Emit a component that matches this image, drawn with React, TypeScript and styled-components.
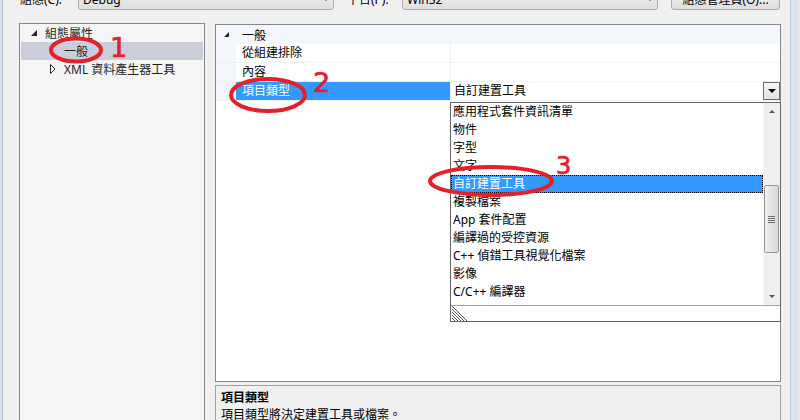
import React from 'react';
import styled, { createGlobalStyle } from 'styled-components';

const GlobalStyle = createGlobalStyle`
  html, body {
    margin: 0;
    padding: 0;
  }
  body {
    font-family: "Noto Sans", "Noto Sans CJK TC", sans-serif;
    font-size: 12px;
    color: #000;
  }
`;

const Screen = styled.div`
  position: relative;
  width: 800px;
  height: 420px;
  overflow: hidden;
  display: flex;
  background: #f0f0f0;
`;

const LeftEdge = styled.div`
  flex: none;
  width: 2px;
  background: #dae3ee;
  border-right: 1px solid #b4bfcb;
`;

const RightEdge = styled.div`
  flex: none;
  width: 6px;
  background: #dae3ef;
  border-left: 1px solid #c3ccd6;
  border-right: 3px solid #e6e6e6;
`;

const Main = styled.div`
  flex: none;
  width: 787px;
  box-sizing: border-box;
  padding: 0 9px 0 16px;
  display: flex;
  flex-direction: column;
`;

const TopBar = styled.div`
  flex: none;
  height: 22px;
  margin-top: -12px;
  display: flex;
  align-items: center;
`;

const Label = styled.div<{ $width: number; $pad?: number }>`
  width: ${({ $width }) => $width}px;
  padding-left: ${({ $pad = 0 }) => $pad}px;
  box-sizing: border-box;
  flex: none;
  white-space: nowrap;
`;

const Combo = styled.div`
  flex: none;
  width: 256px;
  height: 22px;
  box-sizing: border-box;
  border: 1px solid #acacac;
  border-radius: 3px;
  background: linear-gradient(#f4f4f4, #dedede);
  display: flex;
  align-items: center;
  justify-content: space-between;
  padding: 0 4px 0 4px;
`;

const ComboArrow = styled.span`
  width: 0;
  height: 0;
  border-left: 3px solid transparent;
  border-right: 3px solid transparent;
  border-top: 4px solid #000;
`;

const TopButton = styled.div`
  flex: none;
  width: 109px;
  height: 22px;
  margin-left: 13px;
  box-sizing: border-box;
  border: 1px solid #acacac;
  border-radius: 3px;
  background: linear-gradient(#f4f4f4, #dedede);
  display: flex;
  align-items: center;
  justify-content: center;
  white-space: nowrap;
`;

const ContentRow = styled.div`
  flex: none;
  height: 420px;
  margin-top: 13px;
  display: flex;
  gap: 10px;
`;

const TreePanel = styled.div`
  flex: none;
  width: 186px;
  box-sizing: border-box;
  border: 1px solid #828790;
  background: #f5f5f5;
  padding: 0 1px;
`;

const TreeRow = styled.div<{ $indent: number; $selected?: boolean }>`
  height: 18px;
  display: flex;
  align-items: center;
  padding-left: ${({ $indent }) => $indent}px;
  background: ${({ $selected }) => ($selected ? '#cbcdda' : 'transparent')};
  white-space: nowrap;
  color: #1e1e1e;
`;

const Expander = styled.span`
  flex: none;
  width: 14px;
  height: 18px;
  display: flex;
  align-items: center;
`;

const PropsColumn = styled.div`
  flex: none;
  width: 566px;
  display: flex;
  flex-direction: column;
  gap: 3px;
  margin-top: 1px;
`;

const GridPanel = styled.div`
  position: relative;
  flex: none;
  height: 358px;
  box-sizing: border-box;
  border: 1px solid #828790;
  background: #fff;
`;

const CategoryRow = styled.div`
  height: 19px;
  display: flex;
  align-items: center;
  padding-left: 8px;
  background: #f3f6fb;
`;

const CategoryExpander = styled.span`
  flex: none;
  width: 18px;
  display: flex;
  align-items: center;
`;

const PropRow = styled.div`
  height: 19px;
  box-sizing: border-box;
  display: grid;
  grid-template-columns: 20px 215px 1fr;
  border-bottom: 1px solid #f0f0f0;
`;

const Margin = styled.div`
  background: #f3f6fb;
`;

const NameCell = styled.div<{ $selected?: boolean }>`
  padding-left: 6px;
  line-height: 18px;
  border-right: 1px solid #f0f0f0;
  background: ${({ $selected }) => ($selected ? '#3399ff' : '#fff')};
  color: ${({ $selected }) => ($selected ? '#fff' : '#000')};
  white-space: nowrap;
`;

const ValueCell = styled.div`
  display: flex;
  align-items: center;
  justify-content: space-between;
  padding-left: 3px;
  line-height: 18px;
  white-space: nowrap;
`;

const DropButton = styled.div`
  width: 17px;
  height: 18px;
  box-sizing: border-box;
  border: 1px solid #6d6d6d;
  background: linear-gradient(#f6f6f6, #e2e2e2);
  display: flex;
  align-items: center;
  justify-content: center;
`;

const DownArrow = styled.span<{ $color?: string; $size?: number }>`
  width: 0;
  height: 0;
  border-left: ${({ $size = 4 }) => $size}px solid transparent;
  border-right: ${({ $size = 4 }) => $size}px solid transparent;
  border-top: ${({ $size = 4 }) => $size}px solid ${({ $color = '#000' }) => $color};
`;

const UpArrow = styled.span<{ $color?: string; $size?: number }>`
  width: 0;
  height: 0;
  border-left: ${({ $size = 4 }) => $size}px solid transparent;
  border-right: ${({ $size = 4 }) => $size}px solid transparent;
  border-bottom: ${({ $size = 4 }) => $size}px solid ${({ $color = '#000' }) => $color};
`;

const DropList = styled.div`
  position: absolute;
  left: 234px;
  top: 77px;
  width: 331px;
  height: 220px;
  box-sizing: border-box;
  border: 1px solid #646464;
  background: #fff;
  display: flex;
  flex-direction: column;
  z-index: 2;
`;

const ListBody = styled.div`
  flex: none;
  height: 202px;
  display: flex;
`;

const Items = styled.div`
  flex: none;
  width: 312px;
`;

const Item = styled.div<{ $selected?: boolean }>`
  height: 18px;
  line-height: 18px;
  box-sizing: border-box;
  padding-left: 2px;
  white-space: nowrap;
  background: ${({ $selected }) => ($selected ? '#3399ff' : '#fff')};
  color: ${({ $selected }) => ($selected ? '#fff' : '#000')};
  outline: ${({ $selected }) => ($selected ? '1px dotted #000' : 'none')};
  outline-offset: -1px;
`;

const Scrollbar = styled.div`
  flex: none;
  width: 16px;
  background: #f0f0f0;
  border-left: 1px solid #f6f6f6;
  display: flex;
  flex-direction: column;
`;

const ScrollButton = styled.div`
  flex: none;
  height: 17px;
  display: flex;
  align-items: center;
  justify-content: center;
`;

const Track = styled.div`
  flex: 1;
`;

const Thumb = styled.div`
  margin-top: 65px;
  width: 15px;
  height: 68px;
  box-sizing: border-box;
  border: 1px solid #979797;
  border-radius: 2px;
  background: linear-gradient(90deg, #f0f0f0, #d6d6d6);
  display: flex;
  flex-direction: column;
  align-items: center;
  justify-content: center;
  gap: 1px;
`;

const GripLine = styled.span`
  width: 7px;
  height: 1px;
  background: #6f6f6f;
`;

const ListFooter = styled.div`
  flex: 1;
  border-top: 1px solid #a0a0a0;
  display: flex;
  align-items: flex-end;
  padding-left: 1px;
`;

const DescPanel = styled.div`
  flex: 1;
  box-sizing: border-box;
  border: 1px solid #a0a0a0;
  background: #f0f0f0;
  padding: 3px 5px;
  line-height: 17px;
`;

const DescTitle = styled.div`
  font-weight: bold;
`;

const Overlay = styled.svg`
  position: absolute;
  left: 0;
  top: 0;
  pointer-events: none;
  z-index: 5;
`;

const FilledExpander = ({ size = 6 }: { size?: number }) => (
  <svg width={size} height={size} viewBox="0 0 6 6">
    <polygon points="6,0 6,6 0,6" fill="#262626" />
  </svg>
);

const HollowExpander = () => (
  <svg width="6" height="10" viewBox="0 0 6 10">
    <polygon points="0.5,0.5 5,5 0.5,9.5" fill="#fff" stroke="#262626" strokeWidth="1" />
  </svg>
);

const Grip = () => (
  <svg width="16" height="15" viewBox="0 0 16 15">
    {[0, 3, 6, 9, 12].map(y => (
      <line key={y} x1="0" y1={y} x2={15 - y} y2="15" stroke="#555" strokeWidth="1" />
    ))}
  </svg>
);

const listItems = [
  '應用程式套件資訊清單',
  '物件',
  '字型',
  '文字',
  '自訂建置工具',
  '複製檔案',
  'App 套件配置',
  '編譯過的受控資源',
  'C++ 偵錯工具視覺化檔案',
  '影像',
  'C/C++ 編譯器',
];

const props = ['從組建排除', '內容', '項目類型'];

const App = () => {
  const selectedItem = '自訂建置工具';

  return (
    <Screen>
      <GlobalStyle />
      <LeftEdge />
      <Main>
        <TopBar>
          <Label $width={59} $pad={1}>組態(C):</Label>
          <Combo>
            <span>Debug</span>
            <ComboArrow />
          </Combo>
          <Label $width={68} $pad={13}>平台(P):</Label>
          <Combo>
            <span>Win32</span>
            <ComboArrow />
          </Combo>
          <TopButton>組態管理員(O)...</TopButton>
        </TopBar>

        <ContentRow>
          <TreePanel>
            <TreeRow $indent={10}>
              <Expander><FilledExpander /></Expander>
              組態屬性
            </TreeRow>
            <TreeRow $indent={29} $selected>
              <Expander />
              一般
            </TreeRow>
            <TreeRow $indent={29}>
              <Expander><HollowExpander /></Expander>
              XML 資料產生器工具
            </TreeRow>
          </TreePanel>

          <PropsColumn>
            <GridPanel>
              <CategoryRow>
                <CategoryExpander><FilledExpander size={5} /></CategoryExpander>
                一般
              </CategoryRow>
              {props.map((name, i) => {
                const selected = i === props.length - 1;
                return (
                  <PropRow key={name}>
                    <Margin />
                    <NameCell $selected={selected}>{name}</NameCell>
                    <ValueCell>
                      {selected && <span>自訂建置工具</span>}
                      {selected && (
                        <DropButton>
                          <DownArrow $size={4} />
                        </DropButton>
                      )}
                    </ValueCell>
                  </PropRow>
                );
              })}

              <DropList>
                <ListBody>
                  <Items>
                    {listItems.map(item => (
                      <Item key={item} $selected={item === selectedItem}>{item}</Item>
                    ))}
                  </Items>
                  <Scrollbar>
                    <ScrollButton><UpArrow $color="#5a5a5a" $size={3} /></ScrollButton>
                    <Track>
                      <Thumb>
                        <GripLine />
                        <GripLine />
                        <GripLine />
                        <GripLine />
                      </Thumb>
                    </Track>
                    <ScrollButton><DownArrow $color="#5a5a5a" $size={3} /></ScrollButton>
                  </Scrollbar>
                </ListBody>
                <ListFooter>
                  <Grip />
                </ListFooter>
              </DropList>
            </GridPanel>

            <DescPanel>
              <DescTitle>項目類型</DescTitle>
              <div>項目類型將決定建置工具或檔案。</div>
            </DescPanel>
          </PropsColumn>
        </ContentRow>
      </Main>
      <RightEdge />

      <Overlay width="800" height="420" viewBox="0 0 800 420">
        <g fill="none" stroke="#e5202a" strokeWidth="4">
          <ellipse cx="76" cy="50" rx="25" ry="11.5" />
          <ellipse cx="268" cy="95" rx="37" ry="16" />
          <ellipse cx="491" cy="181" rx="61" ry="14" />
        </g>
        <g fill="#e5202a" stroke="#e5202a" strokeWidth="0.7" fontFamily="'DejaVu Sans', sans-serif">
          <text x="110" y="57" fontSize="27">1</text>
          <text x="313" y="92" fontSize="27">2</text>
          <text x="556" y="174" fontSize="24">3</text>
        </g>
      </Overlay>
    </Screen>
  );
};

export default App;
